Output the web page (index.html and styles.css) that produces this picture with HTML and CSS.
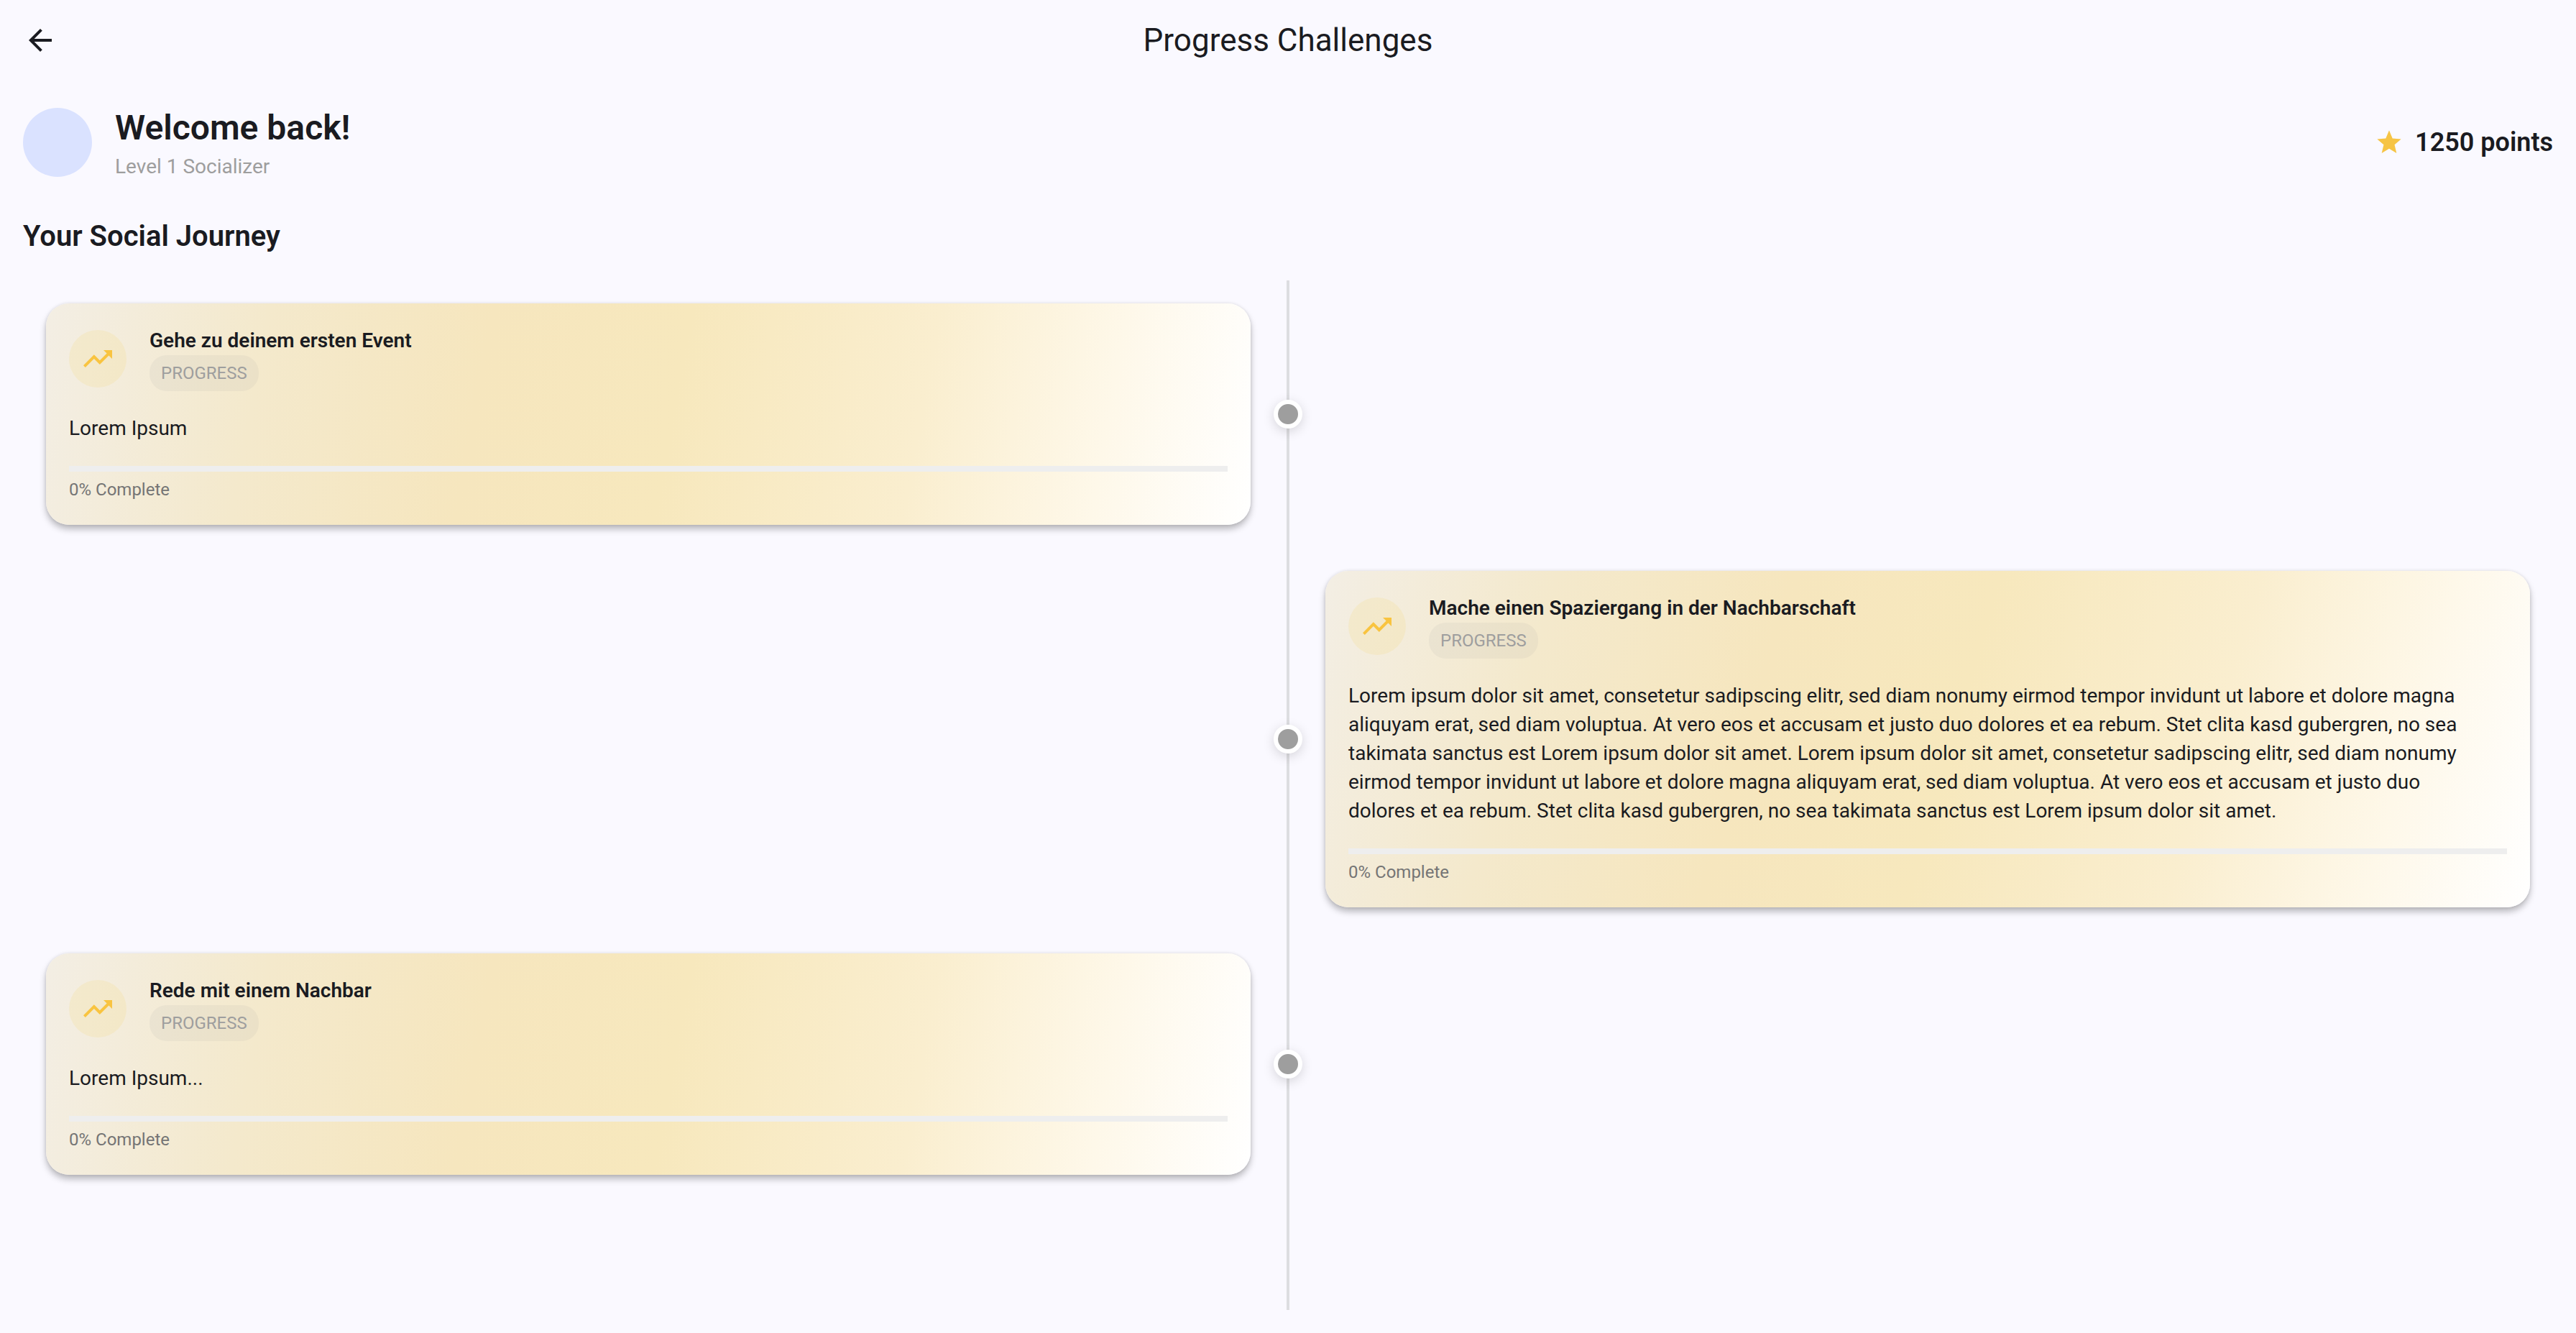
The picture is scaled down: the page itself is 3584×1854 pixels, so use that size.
FILE: index.html
```html
<!DOCTYPE html>
<html lang="de">
<head>
<meta charset="utf-8">
<meta name="viewport" content="width=device-width, initial-scale=1">
<title>Progress Challenges</title>
<link rel="stylesheet" href="styles.css">
</head>
<body>
<svg class="icon-defs" aria-hidden="true">
  <symbol id="icon-trend" viewBox="0 0 24 24"><path d="M16 6l2.29 2.29-4.88 4.88-4-4L2 16.59 3.41 18l6-6 4 4 6.3-6.29L22 12V6z"/></symbol>
</svg>

<header class="app-bar">
  <button class="back-button" type="button" aria-label="Back">
    <svg class="icon" viewBox="0 0 24 24" aria-hidden="true"><path d="M20 11H7.83l5.59-5.59L12 4l-8 8 8 8 1.41-1.41L7.83 13H20v-2z"/></svg>
  </button>
  <h1 class="app-title">Progress Challenges</h1>
</header>

<main class="page">
  <section class="profile">
    <div class="avatar"></div>
    <div class="profile-text">
      <h2 class="welcome">Welcome back!</h2>
      <p class="level">Level 1 Socializer</p>
    </div>
    <div class="points">
      <svg class="star" viewBox="0 0 24 24" aria-hidden="true"><path d="M12 17.27L18.18 21l-1.64-7.03L22 9.24l-7.19-.61L12 2 9.19 8.63 2 9.24l5.46 4.73L5.82 21z"/></svg>
      <span>1250 points</span>
    </div>
  </section>

  <h2 class="section-title">Your Social Journey</h2>

  <ol class="timeline">
    <li class="step">
      <article class="card">
        <header class="card-header">
          <span class="card-icon"><svg class="icon" aria-hidden="true"><use href="#icon-trend"/></svg></span>
          <div class="card-heading">
            <h3 class="card-title">Gehe zu deinem ersten Event</h3>
            <span class="badge">PROGRESS</span>
          </div>
        </header>
        <p class="card-text">Lorem Ipsum</p>
        <progress class="bar" id="progress-event" value="0" max="100"></progress>
        <label class="bar-label" for="progress-event">0% Complete</label>
      </article>
      <span class="dot"></span>
    </li>
    <li class="step step-right">
      <article class="card card-long">
        <header class="card-header">
          <span class="card-icon"><svg class="icon" aria-hidden="true"><use href="#icon-trend"/></svg></span>
          <div class="card-heading">
            <h3 class="card-title">Mache einen Spaziergang in der Nachbarschaft</h3>
            <span class="badge">PROGRESS</span>
          </div>
        </header>
        <p class="card-text">Lorem ipsum dolor sit amet, consetetur sadipscing elitr, sed diam nonumy eirmod tempor invidunt ut labore et dolore magna aliquyam erat, sed diam voluptua. At vero eos et accusam et justo duo dolores et ea rebum. Stet clita kasd gubergren, no sea takimata sanctus est Lorem ipsum dolor sit amet. Lorem ipsum dolor sit amet, consetetur sadipscing elitr, sed diam nonumy eirmod tempor invidunt ut labore et dolore magna aliquyam erat, sed diam voluptua. At vero eos et accusam et justo duo dolores et ea rebum. Stet clita kasd gubergren, no sea takimata sanctus est Lorem ipsum dolor sit amet.</p>
        <progress class="bar" id="progress-walk" value="0" max="100"></progress>
        <label class="bar-label" for="progress-walk">0% Complete</label>
      </article>
      <span class="dot"></span>
    </li>
    <li class="step">
      <article class="card">
        <header class="card-header">
          <span class="card-icon"><svg class="icon" aria-hidden="true"><use href="#icon-trend"/></svg></span>
          <div class="card-heading">
            <h3 class="card-title">Rede mit einem Nachbar</h3>
            <span class="badge">PROGRESS</span>
          </div>
        </header>
        <p class="card-text">Lorem Ipsum...</p>
        <progress class="bar" id="progress-talk" value="0" max="100"></progress>
        <label class="bar-label" for="progress-talk">0% Complete</label>
      </article>
      <span class="dot"></span>
    </li>
  </ol>
</main>
</body>
</html>
```
FILE: styles.css
```css
* {
  box-sizing: border-box;
  margin: 0;
  padding: 0;
}

body {
  display: flex;
  flex-direction: column;
  min-height: 100vh;
  background: #faf9ff;
  color: #1a1b21;
  font-family: Roboto, "Liberation Sans", sans-serif;
  font-size: 28px;
  line-height: 40px;
}

.icon-defs {
  display: none;
}

.icon {
  display: block;
  width: 48px;
  height: 48px;
  fill: currentColor;
}

.app-bar {
  display: grid;
  grid-template-columns: 112px 1fr 112px;
  align-items: center;
  height: 112px;
}

.back-button {
  display: grid;
  place-items: center;
  height: 112px;
  border: 0;
  background: none;
  color: inherit;
  cursor: pointer;
}

.app-title {
  font-size: 44px;
  font-weight: 400;
  line-height: 56px;
  text-align: center;
}

.page {
  display: flex;
  flex: 1;
  flex-direction: column;
  padding: 32px;
}

.profile {
  display: flex;
  align-items: center;
  gap: 32px;
}

.avatar {
  width: 96px;
  height: 96px;
  border-radius: 50%;
  background: #dae2ff;
}

.profile-text {
  flex: 1;
}

.welcome {
  font-size: 48px;
  font-weight: 600;
  line-height: 68px;
}

.level {
  color: #9e9e9e;
}

.points {
  display: flex;
  align-items: center;
  gap: 16px;
  font-size: 36px;
  font-weight: 600;
}

.star {
  width: 40px;
  height: 40px;
  fill: #f6c445;
}

.section-title {
  margin: 48px 0 32px;
  font-size: 40px;
  font-weight: 600;
  line-height: 58px;
}

.timeline {
  flex: 1;
  background: linear-gradient(#dddde1, #dddde1) center / 4px 100% no-repeat;
  list-style: none;
}

.step {
  display: grid;
  grid-template-columns: 1fr 40px 1fr;
  align-items: center;
  column-gap: 32px;
  padding: 32px;
}

.step .card {
  grid-column: 1;
  grid-row: 1;
}

.step-right .card {
  grid-column: 3;
}

.dot {
  grid-column: 2;
  grid-row: 1;
  width: 40px;
  height: 40px;
  border: 6px solid #fff;
  border-radius: 50%;
  background: #9e9e9e;
  box-shadow: 0 4px 16px rgba(0, 0, 0, 0.15);
}

.card {
  --slope: 100deg;
  padding: 32px;
  border-radius: 32px;
  background: linear-gradient(var(--slope), #f3eee4, #f4e9cc 18%, #f6e6be 36%, #f7e8bd 52%, #faeecf 72%, #fef8e9 87%, #fff);
  box-shadow: 0 6px 10px rgba(0, 0, 0, 0.26), 0 0 4px rgba(0, 0, 0, 0.1);
}

.card-long {
  --slope: 106deg;
}

.card-header {
  display: flex;
  align-items: center;
  gap: 32px;
}

.card-icon {
  padding: 16px;
  border-radius: 50%;
  background: rgba(249, 204, 64, 0.12);
  color: #f9c440;
}

.card-heading {
  display: flex;
  flex-direction: column;
  align-items: flex-start;
}

.card-title {
  font-size: 28px;
  font-weight: 600;
}

.badge {
  padding: 8px 16px;
  border-radius: 24px;
  background: rgba(158, 158, 158, 0.1);
  color: #9e9e9e;
  font-size: 24px;
  line-height: 34px;
}

.card-text {
  margin: 32px 0;
  padding-right: 32px;
}

.bar {
  display: block;
  width: 100%;
  height: 8px;
  margin-bottom: 8px;
  border: 0;
  background: #eee;
  appearance: none;
}

.bar::-webkit-progress-bar {
  background: #eee;
}

.bar::-webkit-progress-value {
  background: #f9c440;
}

.bar-label {
  display: block;
  color: #757575;
  font-size: 24px;
  line-height: 34px;
}
```
